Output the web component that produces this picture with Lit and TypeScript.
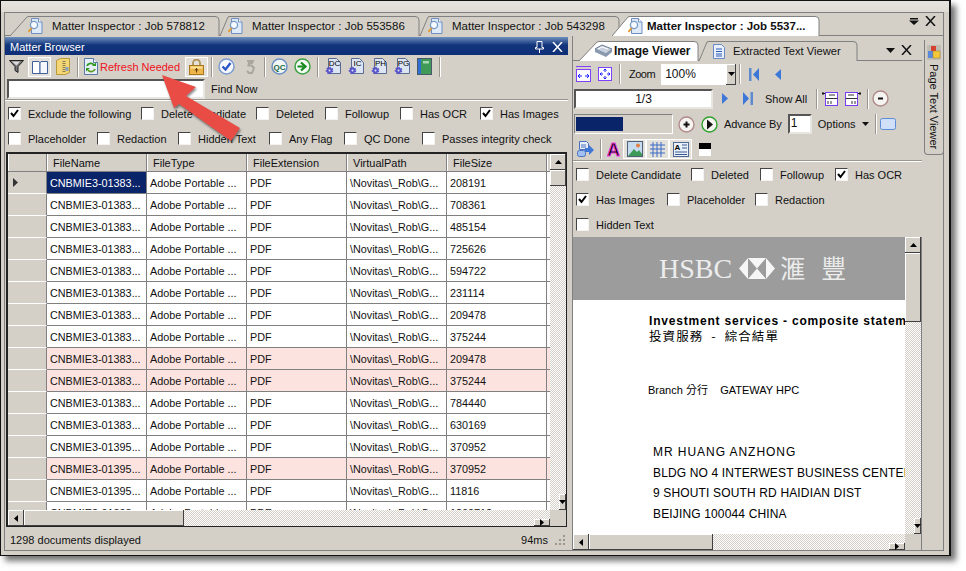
import { LitElement, html, css, svg } from 'lit';
import { customElement } from 'lit/decorators.js';

const ic = (w: number, h: number, body: unknown) =>
  html`<svg class="ic" width=${w} height=${h} viewBox="0 0 ${w} ${h}">${body}</svg>`;

const docMag = ic(15, 16, svg`
  <path d="M3.500 .5h7l3.500 3.500v11.500h-10.500z" fill="#dfeaf8" stroke="#6f8fc0"/>
  <path d="M10.500 .5v3.500h3.500" fill="#fff" stroke="#6f8fc0"/>
  <circle cx="6" cy="7" r="3.600" fill="#f4faff" stroke="#7a9cc8" stroke-width="1.300"/>
  <path d="M3.500 10l-3 4" stroke="#e09a3a" stroke-width="2"/>`);

const funnel = ic(15, 13, svg`
  <path d="M.5 .5h14l-5.500 6v6l-3-2v-4z" fill="#777" stroke="#222"/>
  <path d="M3 1.500h8l-3.500 4z" fill="#ddd"/>`);

const bookOpen = ic(16, 14, svg`
  <path d="M.5 1.500h6.500l1 1.500v10.500h-7.500z" fill="#fff" stroke="#3f5f9f"/>
  <path d="M8 3l1-1.500h6.500v12h-7.500z" fill="#f4f7fb" stroke="#3f5f9f"/>`);

const zipFolder = ic(14, 17, svg`
  <path d="M.5 2.500l4-2h9v14l-4 2h-9z" fill="#f3d777" stroke="#b9993a"/>
  <path d="M8 3v12" stroke="#8c7a4a" stroke-width="3" stroke-dasharray="1 1"/>
  <rect x="9.500" y="9" width="3" height="4" fill="#8aa0c0"/>`);

const refreshDoc = ic(14, 17, svg`
  <path d="M.5 .5h9l4 4v12h-13z" fill="#e6eff9" stroke="#5a78a8"/>
  <path d="M9.500 .5v4h4" fill="#fff" stroke="#5a78a8"/>
  <path d="M3 8a4 4 0 0 1 7-1" fill="none" stroke="#2c9a1e" stroke-width="1.800"/>
  <path d="M11 11a4 4 0 0 1-7 1" fill="none" stroke="#5d9a1e" stroke-width="1.800"/>
  <path d="M8 8h4v-3.500zM6 10h-4v3.500z" fill="#2c9a1e"/>`);

const lock = ic(15, 16, svg`
  <path d="M4 7v-3a3.500 3.500 0 0 1 7 0v3" fill="none" stroke="#b0935a" stroke-width="1.800"/>
  <rect x=".5" y="6.500" width="14" height="9" fill="#eeb54a" stroke="#a8781e"/>
  <rect x="1.500" y="7.500" width="12" height="2" fill="#fbe29a"/>
  <path d="M7.500 9.500v4M6 11.500l1.500-2 1.500 2" stroke="#5a3a08" fill="none"/>`);

const checkCircle = ic(17, 17, svg`
  <circle cx="8.500" cy="8.500" r="7.500" fill="#f6f8fc" stroke="#7b9bd0" stroke-width="1.500"/>
  <path d="M4.500 8.500l3 3 5-6.500" fill="none" stroke="#2a56c8" stroke-width="2.400"/>`);

const greyFive = ic(10, 14, svg`
  <path d="M2 1h6l-1 2h-3l-.5 2.500h3l2.500 2.500-2 5h-3l-2-2" fill="none" stroke="#a9a69e" stroke-width="2"/>`);

const qcCircle = ic(17, 17, svg`
  <circle cx="8.500" cy="8.500" r="7.500" fill="#f2f6f4" stroke="#6b8fc4" stroke-width="1.500"/>
  <text x="8.500" y="11.500" text-anchor="middle" class="qc">QC</text>`);

const goCircle = ic(17, 17, svg`
  <circle cx="8.500" cy="8.500" r="7.500" fill="#f6faf6" stroke="#3aa040" stroke-width="1.500"/>
  <path d="M3.500 8.500h6M7 4.500l4.500 4-4.500 4" fill="none" stroke="#138a1c" stroke-width="2.200"/>`);

const gearDoc = (label: string) => ic(16, 17, svg`
  <path d="M3.500 .5h8l4 4v11h-12z" fill="#dbe5f3" stroke="#5a6a90"/>
  <circle cx="4.500" cy="12.500" r="2.800" fill="#5a55c8" stroke="#5a55c8" stroke-width="2" stroke-dasharray="1.500 1"/>
  <circle cx="4.500" cy="12.500" r="1" fill="#dbe5f3"/>
  <text x="9.500" y="8" text-anchor="middle" class="gd">${label}</text>`);

const greenBook = ic(15, 17, svg`
  <rect x=".5" y=".5" width="14" height="16" fill="#3f9a58" stroke="#4a5a6a"/>
  <rect x="1" y="1" width="3" height="15" fill="#2f6fd0"/>
  <rect x="6" y="3" width="6" height="2.500" fill="#a8d8b0"/>`);

const fitWidth = ic(15, 16, svg`
  <path d="M0 .5h15" stroke="#8040ff"/>
  <rect x=".5" y="3.500" width="14" height="12" fill="#fdfdff" stroke="#8040ff"/>
  <path d="M2 10h4M2 10l2-2M2 10l2 2M13 10h-4M13 10l-2-2M13 10l-2 2" stroke="#1a1aff" fill="none"/>`);

const fitPage = ic(14, 14, svg`
  <rect x=".5" y=".5" width="13" height="13" fill="#fdfdff" stroke="#8040ff"/>
  <path d="M7 2v3M7 9v3M2 7h3M9 7h3M5.500 3.500l1.500-1.500 1.500 1.500M5.500 10.500l1.500 1.500 1.500-1.500M3.500 5.500l-1.500 1.500 1.500 1.500M10.500 5.500l1.500 1.500-1.500 1.500" stroke="#1a1aff" fill="none"/>`);

const navFirst = ic(11, 13, svg`<rect x="0" y="0" width="2.500" height="13" fill="#5e8ad0"/><path d="M10 0v13l-6-6.500z" fill="#3d78d8"/>`);
const navPrev = ic(6, 11, svg`<path d="M6 0v11l-6-5.500z" fill="#3d78d8"/>`);
const navNext = ic(6, 11, svg`<path d="M0 0v11l6-5.500z" fill="#3d78d8"/>`);
const navLast = ic(11, 13, svg`<rect x="8.500" y="0" width="2.500" height="13" fill="#5e8ad0"/><path d="M1 0v13l6-6.500z" fill="#3d78d8"/>`);

const pageLeft = ic(16, 15, svg`
  <rect x="3.500" y="1.500" width="12" height="13" fill="#fff" stroke="#7a3cf0"/>
  <path d="M3.500 7.500h12M7 4h6M6 10v3M9 10v3" stroke="#333" fill="none"/>
  <path d="M0 2.500h3M1.500 1l-1.500 1.500 1.500 1.500" stroke="#111" fill="none"/>`);
const pageRight = ic(16, 15, svg`
  <rect x=".5" y="1.500" width="12" height="13" fill="#fff" stroke="#7a3cf0"/>
  <path d="M.5 7.500h12M3 4h6M7 10v3M10 10v3" stroke="#333" fill="none"/>
  <path d="M13 2.500h3M14.500 1l1.500 1.500-1.500 1.500" stroke="#111" fill="none"/>`);

const ring = (stroke: string, inner: unknown) => ic(17, 17, svg`
  <circle cx="8.500" cy="8.500" r="7.500" fill="#f6f4f0" stroke=${stroke} stroke-width="1.400"/>${inner}`);
const minusBtn = ring('#b08a8a', svg`<rect x="6" y="7.500" width="5" height="2" fill="#111"/>`);
const plusBtn = ring('#b08a8a', svg`<path d="M5.500 8.500h6M8.500 5.500v6" stroke="#111" stroke-width="2"/>`);
const playBtn = ring('#30a030', svg`<path d="M6 3.500v10l6-5z" fill="#111"/>`);

const blueRound = ic(16, 12, svg`
  <rect x=".5" y=".5" width="15" height="11" rx="2" fill="#cfe0f8" stroke="#5a8ad8"/>`);

const docArrow = ic(17, 16, svg`
  <path d="M2.500 .5h7l2 2v6h-9z" fill="#e8eef8" stroke="#4a70c0"/>
  <path d="M4 4h5M4 6h5" stroke="#4a70c0"/>
  <rect x=".5" y="9.500" width="8" height="6" rx="2" fill="#9fc0f0" stroke="#4a70c0"/>
  <path d="M8 7h4v-3l5 5-5 5v-3h-4z" fill="#3d78d8"/>`);

const letterA = ic(17, 16, svg`
  <text x="8.500" y="15" text-anchor="middle" class="bigA">A</text>`);

const landscape = ic(16, 16, svg`
  <rect x=".5" y=".5" width="15" height="15" fill="#c8dcf0" stroke="#50607a"/>
  <path d="M1 15l6-7 3 3 2-2 3 4v2z" fill="#3f9a58"/>
  <circle cx="11" cy="4.500" r="2" fill="#e08040"/>`);

const gridIcon = ic(15, 15, svg`
  <path d="M0 3h15M0 7h15M0 11h15M3 0v15M7 0v15M11 0v15" stroke="#3a6ac8" fill="none"/>`);

const textIcon = ic(16, 15, svg`
  <rect x=".5" y=".5" width="15" height="14" fill="#eaf0f8" stroke="#506a98"/>
  <text x="4.500" y="8" text-anchor="middle" class="tx">A</text>
  <path d="M9 3h5M9 6h5M2 10h12M2 12.500h12" stroke="#3a5a98" fill="none"/>`);

const sideIcon = ic(14, 15, svg`
  <rect x="0" y="0" width="14" height="15" fill="#bfbcb4"/>
  <rect x="4" y="1" width="5" height="5" fill="#d84030"/>
  <rect x="1" y="6" width="5" height="7" fill="#5a8ad8"/>
  <rect x="6" y="6" width="7" height="7" fill="#f3c83a" stroke="#a08020" stroke-width=".5"/>`);

const pageSmall = ic(12, 15, svg`
  <path d="M.5 .5h8l3 3v11h-11z" fill="#eaf0fb" stroke="#6a8ac8"/>
  <path d="M3 5h6M3 7.500h6M3 10h6M3 12h6" stroke="#2a5ab8"/>`);

const camera = ic(19, 14, svg`
  <path d="M1 5l7-4 10 4-6 5z" fill="#c6d0de" stroke="#6a7a90"/>
  <path d="M1 5v3l11 5 6-5v-3l-6 5z" fill="#8a9ab0"/>
  <path d="M4 5l4-2 6 2" stroke="#fff" fill="none"/>`);

const closeX = ic(11, 10, svg`<path d="M1 0l9 10M10 0l-9 10" stroke="#111" stroke-width="1.500"/>`);
const closeXWhite = ic(11, 10, svg`<path d="M1 0l9 10M10 0l-9 10" stroke="#fff" stroke-width="1.500"/>`);
const pin = ic(9, 12, svg`<path d="M2 .5h5v6h1.500v1.500h-8v-1.500h1.500zM4.500 8v4" stroke="#fff" fill="none"/>`);
const dropLines = ic(10, 7, svg`<path d="M1 0h8v1.500h-8zM0 2.500h10l-5 4.500z" fill="#111"/>`);
const dropTri = ic(9, 5, svg`<path d="M0 0h9l-4.500 5z" fill="#111"/>`);
const dropSmall = ic(7, 4, svg`<path d="M0 0h7l-3.500 4z" fill="#111"/>`);

const checkMark = html`<svg class="ic" width="9" height="9" viewBox="0 0 9 9"><path d="M1 4l2.500 3 4.500-6" fill="none" stroke="#000" stroke-width="2"/></svg>`;

const arrowUp = ic(7, 4, svg`<path d="M0 4h7l-3.500-4z" fill="#000"/>`);
const arrowDown = ic(7, 4, svg`<path d="M0 0h7l-3.500 4z" fill="#000"/>`);
const arrowLeft = ic(4, 7, svg`<path d="M4 0v7l-4-3.500z" fill="#000"/>`);
const arrowRight = ic(4, 7, svg`<path d="M0 0v7l4-3.500z" fill="#000"/>`);

const hsbcMark = ic(36, 21, svg`
  <path d="M0 10.500L9 0v21zM36 10.500L27 0v21zM9 0h18l-9 10.500zM9 21h18l-9-10.500z" fill="#f6f6f6"/>`);

const leftChecks1: [string, boolean][] = [
  ['Exclude the following', true], ['Delete Candidate', false], ['Deleted', false],
  ['Followup', false], ['Has OCR', false], ['Has Images', true],
];
const leftChecks2: [string, boolean][] = [
  ['Placeholder', false], ['Redaction', false], ['Hidden Text', false],
  ['Any Flag', false], ['QC Done', false], ['Passes integrity check', false],
];
const rightChecks1: [string, boolean][] = [
  ['Delete Candidate', false], ['Deleted', false], ['Followup', false], ['Has OCR', true],
];
const rightChecks2: [string, boolean][] = [
  ['Has Images', true], ['Placeholder', false], ['Redaction', false],
];

const columns = ['FileName', 'FileType', 'FileExtension', 'VirtualPath', 'FileSize', ''];

// [job suffix, size, pink]
const rows: [string, string, boolean][] = [
  ['01383', '208191', false], ['01383', '708361', false], ['01383', '485154', false],
  ['01383', '725626', false], ['01383', '594722', false], ['01383', '231114', false],
  ['01383', '209478', false], ['01383', '375244', false], ['01383', '209478', true],
  ['01383', '375244', true], ['01383', '784440', false], ['01383', '630169', false],
  ['01395', '370952', false], ['01395', '370952', true], ['01395', '11816', false],
  ['01398', '1260712', false],
];

const tabOutline = (w: number, slant: number, active: boolean) => html`
  <svg class="tabshape" width=${w} height="21" viewBox="0 0 ${w} 21">
    <path d="M0 20 L${slant} 1 Q${slant + 1} .5 ${slant + 2} .5 H${w - 5} Q${w - 1} .5 ${w - 1} 4 V20"
      fill=${active ? '#fff' : '#d4d0c8'} stroke="#808080"/>
  </svg>`;

@customElement('app-root')
export class AppRoot extends LitElement {
  static styles = css`
    :host {
      display: block;
      width: 966px;
      height: 571px;
      position: relative;
      overflow: hidden;
      background: #fff;
      font: 11px "Liberation Sans", Arial, sans-serif;
      color: #111;
    }
    .ic { display: block; flex: none; }
    .qc { font: bold 8px "Liberation Sans", sans-serif; fill: #12663a; }
    .gd { font: 8px "Liberation Sans", sans-serif; fill: #000; }
    .tx { font: bold 8px "Liberation Sans", sans-serif; fill: #000; }
    .bigA { font: bold 18px "Liberation Sans", sans-serif; fill: #000; stroke: #f040e0; stroke-width: 1; }

    .window {
      box-sizing: border-box;
      width: 951px;
      height: 556px;
      border: 1px solid #111;
      border-right-width: 2px;
      background: #d4d0c8;
      box-shadow: 5px 5px 6px rgba(0,0,0,.55);
      display: flex;
      flex-direction: column;
    }
    .topband { height: 11px; flex: none; background: linear-gradient(#e6e4de, #dfdcd5); }
    .frame {
      flex: 1;
      margin: 0 5px 4px 3px;
      border: 1px solid #808080;
      display: flex;
      flex-direction: column;
      min-height: 0;
    }

    .tabs {
      height: 23px;
      flex: none;
      display: flex;
      align-items: flex-end;
      padding-left: 5px;
      border-bottom: 1px solid #808080;
      box-sizing: border-box;
    }
    .tab {
      position: relative;
      height: 20px;
      flex: none;
      display: flex;
      align-items: center;
      font-size: 11.5px;
      white-space: nowrap;
      margin-bottom: -1px;
    }
    .tabshape { position: absolute; left: 0; top: 0; }
    .tab > .ic, .tab > span { position: relative; }
    .t1 { width: 210px; padding-left: 18px; box-sizing: border-box; }
    .t1 > span, .t2 > span { margin-left: 9px; }
    .t2 { width: 200px; padding-left: 8px; box-sizing: border-box; }
    .t4 { width: 208px; margin-left: -8px; padding-left: 16px; box-sizing: border-box; z-index: 1; font-weight: bold; }
    .t4 > span { margin-left: 4px; }
    .tabtools { margin-left: auto; display: flex; align-items: center; gap: 6px; padding: 0 7px 9px 0; }

    .body { flex: 1; display: flex; min-height: 0; }
    .left { width: 563px; flex: none; display: flex; flex-direction: column; margin-top: 1px; }
    .title {
      height: 18px;
      flex: none;
      color: #fff;
      display: flex;
      align-items: center;
      box-sizing: border-box;
      padding: 1px 5px 0;
      background: linear-gradient(#6f8fbd, #12357c 45%, #0e2f78);
    }
    .title .tools { margin-left: auto; display: flex; align-items: center; gap: 8px; }
    .tb { display: flex; align-items: center; height: 23px; flex: none; }
    .b { width: 23px; height: 20px; flex: none; display: flex; align-items: center; justify-content: center; box-sizing: border-box; }
    .on { box-shadow: inset 1px 1px #fff, inset -1px -1px #fff; background: #e4e1da; }
    .w19 { width: 19px; }
    .sep { width: 2px; height: 20px; flex: none; margin: 0 2px 0 3px; background: linear-gradient(90deg, #9a968e 50%, #fff 50%); }
    .sep.tight { margin: 0 0 0 9px; }
    .sep.ml6 { margin-left: 6px; }
    .refresh { color: #f01020; font-size: 11px; white-space: nowrap; width: 85px; flex: none; }
    .sunken {
      box-sizing: border-box;
      background: #fff;
      border: 2px solid;
      border-color: #555 #e8e6e0 #e8e6e0 #555;
    }
    .find { height: 20px; display: flex; align-items: center; flex: none; padding-left: 2px; margin-top: 1px; }
    .find .sunken { width: 198px; height: 20px; }
    .find span { margin-left: 6px; font-size: 11px; }
    .groove { height: 2px; flex: none; background: linear-gradient(#9a968e 50%, #fff 50%); }

    .checks { display: grid; height: 25px; flex: none; align-items: center; padding-left: 3px; }
    .lc1 { grid-template-columns: 133px 115px 69px 75px 80px auto; }
    .lc2 { grid-template-columns: 89px 81px 91px 75px 78px auto; }
    .rc1 { grid-template-columns: 115px 69px 75px auto; padding-left: 3px; }
    .rc2 { grid-template-columns: 91px 88px auto; padding-left: 3px; }
    .check { display: flex; align-items: center; gap: 7px; white-space: nowrap; }
    .box {
      box-sizing: border-box;
      width: 13px;
      height: 13px;
      flex: none;
      background: #fff;
      border: 1px solid;
      border-color: #444 #f4f2ee #f4f2ee #444;
      display: flex;
      align-items: center;
      justify-content: center;
    }

    .grid {
      box-sizing: border-box;
      margin: 1px 1px 0 1px;
      height: 375px;
      flex: none;
      border: 1px solid #222;
      border-top-width: 2px;
      border-left-width: 2px;
      display: grid;
      grid-template-columns: 1fr 16px;
      grid-template-rows: 1fr 16px;
      background: #808080;
    }
    .sheet { overflow: hidden; background: #808080; min-width: 0; }
    .row { display: grid; grid-template-columns: 39px 100px 100px 100px 100px 100px 20px; height: 22px; }
    .row.head { height: 18px; }
    .cell {
      box-sizing: border-box;
      background: #fff;
      border-right: 1px solid #808080;
      border-bottom: 1px solid #808080;
      padding-left: 3px;
      font-size: 10.8px;
      line-height: 22px;
      white-space: nowrap;
      overflow: hidden;
    }
    .pink .cell { background: #fde3df; }
    .cell.sel { background: #0a246a; color: #fff; }
    .rh {
      box-sizing: border-box;
      background: #d4d0c8;
      border-right: 1px solid #808080;
      border-bottom: 1px solid #fff;
      display: flex;
      align-items: center;
      padding-left: 5px;
    }
    .hc {
      box-sizing: border-box;
      background: #d4d0c8;
      border-right: 1px solid #808080;
      border-bottom: 1px solid #808080;
      box-shadow: inset 1px 0 #fff;
      padding-left: 6px;
      line-height: 18px;
      overflow: hidden;
    }

    .sv, .sh {
      display: flex;
      background: repeating-conic-gradient(#d4d0c8 0 25%, #fff 0 50%) 0 0 / 2px 2px;
      min-width: 0;
      min-height: 0;
    }
    .sv { flex-direction: column; }
    .sbtn {
      box-sizing: border-box;
      background: #d4d0c8;
      box-shadow: inset -1px -1px #404040, inset 1px 1px #fff;
      flex: none;
      display: flex;
      align-items: center;
      justify-content: center;
    }
    .sv .sbtn { height: 16px; }
    .sh .sbtn { width: 16px; }
    .sv .sbtn.tv { height: 69px; }
    .sh .sbtn.th1 { width: 160px; }
    .sh .sbtn.th2 { width: 124px; }
    .sv .end, .sh .end { margin-top: auto; margin-left: auto; }
    .corner { background: #d4d0c8; }
    .status {
      flex: 1;
      display: flex;
      align-items: center;
      box-sizing: border-box;
      padding: 2px 3px 0 5px;
      justify-content: space-between;
      font-size: 11px;
    }
    .grip { display: flex; align-items: center; gap: 6px; }

    .right { width: 349px; flex: none; margin-left: 4px; display: flex; flex-direction: column; border-left: 1px solid #808080; }
    .ptabs { height: 25px; flex: none; display: flex; align-items: flex-end; border-bottom: 1px solid #808080; box-sizing: border-box; padding-left: 6px; }
    .p1 { width: 120px; font-size: 12px; font-weight: bold; padding-left: 15px; box-sizing: border-box; z-index: 1; }
    .p1 > span { margin-left: 1px; }
    .p2 { width: 159px; padding-left: 14px; box-sizing: border-box; font-size: 11.2px; }
    .p2 > span { margin-left: 8px; }
    .ptools { margin-left: auto; display: flex; align-items: center; gap: 6px; padding: 0 10px 5px 0; }
    .rtb { display: flex; align-items: center; flex: none; padding: 2px 0 0 1px; box-sizing: border-box; }
    .r1 { height: 24px; }
    .r2 { height: 25px; }
    .r3 { height: 26px; }
    .r4 { height: 24px; }
    .zoom { letter-spacing: -.5px; margin-left: 6px; white-space: nowrap; flex: none; }
    .combo { width: 75px; height: 21px; background: #fff; display: flex; flex: none; margin-left: 6px; align-items: center; padding-left: 4px; box-sizing: border-box; font-size: 12px; justify-content: space-between; }
    .combo .sbtn { width: 10px; height: 21px; }
    .pageinput { width: 139px; height: 20px; display: flex; align-items: center; justify-content: center; flex: none; font-size: 12px; }
    .progress { width: 99px; height: 20px; box-sizing: border-box; border: 1px solid; border-color: #808080 #fff #fff #808080; padding: 2px 1px; flex: none; }
    .bar { height: 100%; background: #0a246a; }
    .advance { width: 24px; height: 20px; margin: 0 6px; flex: none; padding-left: 1px; font-size: 12px; }
    .swatch { width: 12px; height: 13px; margin-left: 7px; background: linear-gradient(#000 50%, #fff 50%); flex: none; }
    .gap6 { margin-left: 6px; }
    .gap2 { margin-left: 2px; }
    .gap3 { margin-left: 3px; }
    .nw { white-space: nowrap; flex: none; }
    .adv { letter-spacing: -.1px; }

    .viewer {
      flex: 1;
      min-height: 0;
      display: grid;
      grid-template-columns: 1fr 16px;
      grid-template-rows: 1fr 16px;
      border-right: 1px solid #808080;
    }
    .doc { overflow: hidden; background: #fff; min-width: 0; white-space: nowrap; color: #000; }
    .banner {
      height: 63px;
      background: #9c9c9c;
      display: flex;
      align-items: center;
      padding-left: 86px;
      color: #ececec;
    }
    .hsbc { font: 28px "Liberation Serif", serif; margin-right: 7px; }
    .cjkmark { font: 25px "Noto Sans CJK TC", sans-serif; margin-left: 5px; letter-spacing: 16px; padding-bottom: 4px; }
    .lines { padding: 13px 0 0 75px; }
    .inv { font: bold 12px "Liberation Sans", sans-serif; letter-spacing: .8px; height: 14px; line-height: 16px; margin-left: 1px; }
    .cn { font: 12.5px "Noto Sans CJK TC", sans-serif; height: 18px; line-height: 18px; letter-spacing: 1.1px; word-spacing: 4px; margin-left: 1px; }
    .branch { font: 11px "Liberation Sans", "Noto Sans CJK TC", sans-serif; margin-top: 36px; white-space: pre; }
    .addr { margin: 45px 0 0 5px; font-size: 12px; line-height: 20.7px; letter-spacing: .15px; }
    .wide { letter-spacing: .95px; }

    .side { width: 20px; margin: 4px 0 0 2px; height: 115px; flex: none; box-sizing: border-box; border: 1px solid #808080; border-top: 0; border-radius: 0 0 4px 4px; display: flex; flex-direction: column; align-items: center; padding-top: 5px; gap: 4px; }
    .side span { writing-mode: vertical-rl; font-size: 11px; white-space: nowrap; }

    .arrow { position: absolute; left: 0; top: 0; pointer-events: none; filter: drop-shadow(1px 2px 1px rgba(0,0,0,.45)); }
  `;

  private renderCheck([label, on]: [string, boolean]) {
    return html`<div class="check"><div class="box">${on ? checkMark : ''}</div><span>${label}</span></div>`;
  }

  private renderGrid() {
    return html`
      <div class="grid">
        <div class="sheet">
          <div class="row head">
            <div class="hc"></div>
            ${columns.map((c) => html`<div class="hc">${c}</div>`)}
          </div>
          ${rows.map(([job, size, pink], i) => html`
            <div class="row ${pink ? 'pink' : ''}">
              <div class="rh">${i === 0 ? ic(5, 9, svg`<path d="M0 0v9l5-4.500z" fill="#333"/>`) : ''}</div>
              <div class="cell ${i === 0 ? 'sel' : ''}">CNBMIE3-${job}...</div>
              <div class="cell">Adobe Portable ...</div>
              <div class="cell">PDF</div>
              <div class="cell">\\Novitas\\_Rob\\G...</div>
              <div class="cell">${size}</div>
              <div class="cell"></div>
            </div>`)}
        </div>
        <div class="sv">
          <div class="sbtn">${arrowUp}</div>
          <div class="sbtn"></div>
          <div class="sbtn end">${arrowDown}</div>
        </div>
        <div class="sh">
          <div class="sbtn">${arrowLeft}</div>
          <div class="sbtn th1"></div>
          <div class="sbtn end">${arrowRight}</div>
        </div>
        <div class="corner"></div>
      </div>`;
  }

  private renderLeft() {
    return html`
      <div class="left">
        <div class="title">
          <span>Matter Browser</span>
          <div class="tools">${pin}${closeXWhite}</div>
        </div>
        <div class="tb">
          <div class="b">${funnel}</div>
          <div class="b on">${bookOpen}</div>
          <div class="b">${zipFolder}</div>
          <div class="sep"></div>
          <div class="b w19">${refreshDoc}</div>
          <div class="refresh">Refresh Needed</div>
          <div class="b on">${lock}</div>
          <div class="sep"></div>
          <div class="b">${checkCircle}</div>
          <div class="b">${greyFive}</div>
          <div class="sep"></div>
          <div class="b">${qcCircle}</div>
          <div class="b">${goCircle}</div>
          <div class="sep"></div>
          <div class="b">${gearDoc('DC')}</div>
          <div class="b">${gearDoc('IC')}</div>
          <div class="b">${gearDoc('PH')}</div>
          <div class="b">${gearDoc('PG')}</div>
          <div class="b">${greenBook}</div>
          <div class="sep"></div>
        </div>
        <div class="find"><div class="sunken"></div><span>Find Now</span></div>
        <div class="groove"></div>
        <div class="checks lc1">${leftChecks1.map((c) => this.renderCheck(c))}</div>
        <div class="checks lc2">${leftChecks2.map((c) => this.renderCheck(c))}</div>
        ${this.renderGrid()}
        <div class="status">
          <span>1298 documents displayed</span>
          <div class="grip">
            <span>94ms</span>
            ${ic(11, 11, svg`<path d="M9 1h2v2h-2zM5 5h2v2h-2zM9 5h2v2h-2zM1 9h2v2h-2zM5 9h2v2h-2zM9 9h2v2h-2z" fill="#9a968e"/>`)}
          </div>
        </div>
      </div>`;
  }

  private renderRight() {
    return html`
      <div class="right">
        <div class="ptabs">
          <div class="tab p1">${tabOutline(120, 18, true)}${camera}<span>Image Viewer</span></div>
          <div class="tab p2">${tabOutline(159, 8, false)}${pageSmall}<span>Extracted Text Viewer</span></div>
          <div class="ptools">${dropTri}${closeX}</div>
        </div>
        <div class="rtb r1">
          <div class="b w19">${fitWidth}</div>
          <div class="b">${fitPage}</div>
          <div class="sep"></div>
          <span class="zoom">Zoom</span>
          <div class="combo"><span>100%</span><div class="sbtn">${arrowDown}</div></div>
          <div class="sep"></div>
          <div class="b">${navFirst}</div>
          <div class="b">${navPrev}</div>
        </div>
        <div class="rtb r2">
          <div class="sunken pageinput">1/3</div>
          <div class="b">${navNext}</div>
          <div class="b">${navLast}</div>
          <span class="gap6 nw">Show All</span>
          <div class="sep tight"></div>
          <div class="b">${pageLeft}</div>
          <div class="b">${pageRight}</div>
          <div class="sep"></div>
          <div class="b w19">${minusBtn}</div>
        </div>
        <div class="rtb r3">
          <div class="progress"><div class="bar" style="width:49%"></div></div>
          <div class="b gap2">${plusBtn}</div>
          <div class="b">${playBtn}</div>
          <span class="nw adv gap3">Advance By</span>
          <div class="sunken advance">1</div>
          <span class="nw">Options</span>
          <div class="gap6">${dropSmall}</div>
          <div class="sep ml6"></div>
          <div class="b w19">${blueRound}</div>
        </div>
        <div class="rtb r4">
          <div class="b">${docArrow}</div>
          <div class="sep"></div>
          <div class="b w19">${letterA}</div>
          <div class="b on">${landscape}</div>
          <div class="b on">${gridIcon}</div>
          <div class="b on">${textIcon}</div>
          <div class="swatch"></div>
        </div>
        <div class="groove"></div>
        <div class="checks rc1">${rightChecks1.map((c) => this.renderCheck(c))}</div>
        <div class="checks rc2">${rightChecks2.map((c) => this.renderCheck(c))}</div>
        <div class="checks">${this.renderCheck(['Hidden Text', false])}</div>
        <div class="viewer">
          <div class="doc">
            <div class="banner">
              <span class="hsbc">HSBC</span>${hsbcMark}<span class="cjkmark">滙豐</span>
            </div>
            <div class="lines">
              <div class="inv">Investment services - composite statement</div>
              <div class="cn">投資服務 - 綜合結單</div>
              <div class="branch">Branch 分行    GATEWAY HPC</div>
              <div class="addr">
                <div class="wide">MR HUANG ANZHONG</div>
                <div>BLDG NO 4 INTERWEST BUSINESS CENTER</div>
                <div>9 SHOUTI SOUTH RD HAIDIAN DIST</div>
                <div>BEIJING 100044 CHINA</div>
              </div>
            </div>
          </div>
          <div class="sv">
            <div class="sbtn">${arrowUp}</div>
            <div class="sbtn tv"></div>
            <div class="sbtn end">${arrowDown}</div>
          </div>
          <div class="sh">
            <div class="sbtn">${arrowLeft}</div>
            <div class="sbtn th2"></div>
            <div class="sbtn end">${arrowRight}</div>
          </div>
          <div class="corner"></div>
        </div>
      </div>`;
  }

  render() {
    return html`
      <div class="window">
        <div class="topband"></div>
        <div class="frame">
          <div class="tabs">
            <div class="tab t1">${tabOutline(210, 17, false)}${docMag}<span>Matter Inspector : Job 578812</span></div>
            <div class="tab t2">${tabOutline(200, 8, false)}${docMag}<span>Matter Inspector : Job 553586</span></div>
            <div class="tab t2">${tabOutline(200, 8, false)}${docMag}<span>Matter Inspector : Job 543298</span></div>
            <div class="tab t4">${tabOutline(208, 16, true)}${docMag}<span>Matter Inspector : Job 5537...</span></div>
            <div class="tabtools">${dropLines}${closeX}</div>
          </div>
          <div class="body">
            ${this.renderLeft()}
            ${this.renderRight()}
            <div class="side">${sideIcon}<span>Page Text Viewer</span></div>
          </div>
        </div>
      </div>
      <svg class="arrow" width="966" height="571" viewBox="0 0 966 571">
        <path d="M162 75L196 87 186 96 240 128 231 141 179 104 174 108z" fill="#e94b45"/>
      </svg>`;
  }
}
